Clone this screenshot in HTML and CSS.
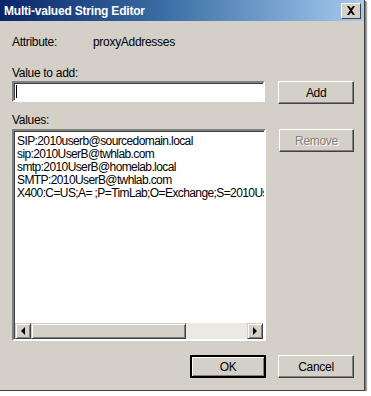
FILE: index.html
```html
<!DOCTYPE html>
<html lang="en">
<head>
  <meta charset="UTF-8">
  <title>Multi-valued String Editor</title>
  <link rel="stylesheet" href="styles.css">
</head>
<body>

<div class="dialog">
  <div class="titlebar">
    <span class="title">Multi-valued String Editor</span>
    <span class="close">
      <svg width="10" height="9" viewBox="0 0 10 9">
        <path d="M1 0h2l2 2.5L7 0h2L6 4.5 9 9H7L5 6.5 3 9H1l3-4.5z" fill="#000"/>
      </svg>
    </span>
  </div>

  <div class="content">
    <div class="attr">
      <span class="attr-label">Attribute:</span>
      <span>proxyAddresses</span>
    </div>

    <div class="label">Value to add:</div>
    <div class="row">
      <div class="input"><span class="caret"></span></div>
      <button class="btn">Add</button>
    </div>

    <div class="label values-label">Values:</div>
    <div class="row">
      <div class="listbox">
        <div class="items">
          <div>SIP:2010userb@sourcedomain.local</div>
          <div>sip:2010UserB@twhlab.com</div>
          <div>smtp:2010UserB@homelab.local</div>
          <div>SMTP:2010UserB@twhlab.com</div>
          <div>X400:C=US;A= ;P=TimLab;O=Exchange;S=2010UserB;</div>
        </div>
        <div class="hscroll">
          <span class="sb-btn"><span class="arrow-left"></span></span>
          <span class="thumb"></span>
          <span class="track"></span>
          <span class="sb-btn"><span class="arrow-right"></span></span>
        </div>
      </div>
      <button class="btn" disabled>Remove</button>
    </div>

    <div class="footer">
      <button class="btn default">OK</button>
      <button class="btn">Cancel</button>
    </div>
  </div>
</div>

</body>
</html>
```

FILE: styles.css
```css
body {
  margin: 0;
  background-color: #fff;
  font-family: 'Liberation Sans', Arial, sans-serif;
  font-size: 12px;
  letter-spacing: -0.3px;
  color: #000;
}

.dialog {
  width: 364px;
  height: 390px;
  background-color: #d4d0c8;
  border-right: 1px solid #404040;
  border-bottom: 1px solid #404040;
  box-shadow: 1px 1px 0 #808080, 2px 2px 1px rgba(0,0,0,0.35);
}

.titlebar {
  height: 21px;
  display: flex;
  align-items: center;
  justify-content: space-between;
  padding: 0 4px 0 4px;
  background: linear-gradient(to right, #0a246a 0%, #3a6ea5 45%, #a6caf0 100%);
}

.title {
  color: #fff;
  font-weight: bold;
  font-size: 12px;
  letter-spacing: -0.2px;
}

.close {
  width: 20px;
  height: 16px;
  box-sizing: border-box;
  display: flex;
  align-items: center;
  justify-content: center;
  background-color: #d4d0c8;
  border: 1px solid;
  border-color: #fff #404040 #404040 #fff;
  margin-right: -1px;
}

.content {
  padding: 0 10px 0 12px;
}

.attr {
  display: flex;
  margin-top: 14px;
  height: 14px;
}

.attr-label {
  width: 81px;
}

.label {
  margin-top: 17px;
  height: 15px;
}

.values-label {
  margin-top: 9px;
  height: 16px;
}

.row {
  display: flex;
  align-items: flex-start;
  gap: 13px;
}

.input {
  width: 254px;
  height: 21px;
  box-sizing: border-box;
  background-color: #fff;
  border: 2px solid;
  border-color: #808080 #fff #fff #808080;
  box-shadow: inset 1px 1px 0 #404040;
  display: flex;
  align-items: center;
  padding-left: 2px;
}

.caret {
  width: 1px;
  height: 13px;
  background-color: #000;
}

.btn {
  width: 76px;
  height: 23px;
  padding: 0;
  font-family: inherit;
  font-size: 12px;
  letter-spacing: -0.3px;
  color: #000;
  background-color: #d4d0c8;
  border: 1px solid;
  border-color: #fff #404040 #404040 #fff;
  box-shadow: inset -1px -1px 0 #808080;
}

.btn:disabled {
  color: #808080;
  text-shadow: 1px 1px 0 #fff;
}

.btn.default {
  border: 2px solid #000;
  box-shadow: inset 1px 1px 0 #fff, inset -1px -1px 0 #808080;
}

.listbox {
  width: 254px;
  height: 212px;
  box-sizing: border-box;
  background-color: #fff;
  border: 2px solid;
  border-color: #808080 #fff #fff #808080;
  box-shadow: inset 1px 1px 0 #404040;
  display: flex;
  flex-direction: column;
  padding: 1px 0 0 1px;
}

.items {
  flex: 1;
  overflow: hidden;
  white-space: nowrap;
  padding: 3px 0 0 2px;
  line-height: 13px;
  letter-spacing: -0.6px;
}

.hscroll {
  height: 16px;
  display: flex;
  margin-right: 1px;
}

.sb-btn {
  width: 16px;
  height: 16px;
  box-sizing: border-box;
  display: flex;
  align-items: center;
  justify-content: center;
  background-color: #d4d0c8;
  border: 1px solid;
  border-color: #d4d0c8 #404040 #404040 #d4d0c8;
  box-shadow: inset 1px 1px 0 #fff, inset -1px -1px 0 #808080;
}

.arrow-left {
  border-top: 4px solid transparent;
  border-bottom: 4px solid transparent;
  border-right: 4px solid #000;
}

.arrow-right {
  border-top: 4px solid transparent;
  border-bottom: 4px solid transparent;
  border-left: 4px solid #000;
}

.thumb {
  width: 155px;
  box-sizing: border-box;
  background-color: #d4d0c8;
  border: 1px solid;
  border-color: #d4d0c8 #404040 #404040 #d4d0c8;
  box-shadow: inset 1px 1px 0 #fff, inset -1px -1px 0 #808080;
}

.track {
  flex: 1;
  background-color: #ebe9e4;
}

.footer {
  display: flex;
  justify-content: flex-end;
  gap: 12px;
  margin-top: 14px;
}
```
